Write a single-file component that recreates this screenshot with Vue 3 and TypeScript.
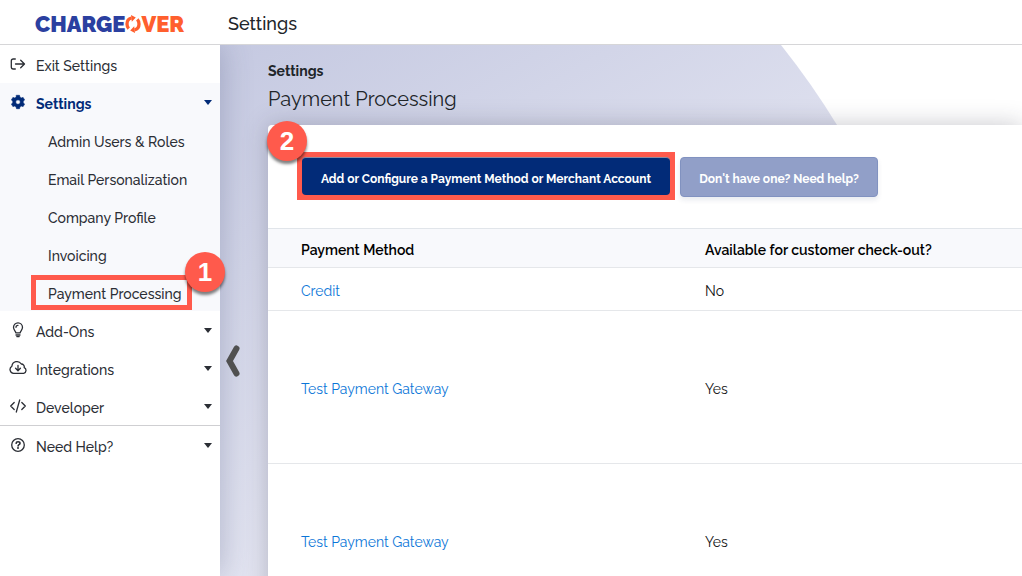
<script setup lang="ts">
import { ref } from 'vue'

interface NavItem {
  label: string
  icon: string
}

const subItems: string[] = [
  'Admin Users & Roles',
  'Email Personalization',
  'Company Profile',
  'Invoicing',
  'Payment Processing',
]
const current = ref('Payment Processing')

const sections: NavItem[] = [
  { label: 'Add-Ons', icon: 'bulb' },
  { label: 'Integrations', icon: 'cloud' },
  { label: 'Developer', icon: 'code' },
  { label: 'Need Help?', icon: 'help' },
]

const methods = [
  { name: 'Credit', available: 'No', tall: false },
  { name: 'Test Payment Gateway', available: 'Yes', tall: true },
  { name: 'Test Payment Gateway', available: 'Yes', tall: true },
]
</script>

<template>
  <div class="page">
    <header class="topbar">
      <a class="logo" href="#" aria-label="ChargeOver">
        <span class="logo-blue">CHARGE</span>
        <svg class="logo-o" viewBox="0 0 16 18" aria-hidden="true">
          <path d="M6.500 3C3.700 3.700 2 6 2 9c0 1.900.6 3.400 1.700 4.600M9.500 15c2.800-.7 4.500-3 4.500-6 0-1.900-.6-3.400-1.700-4.600" fill="none" stroke="#ff5f2e" stroke-width="3.300" />
          <path d="M6 0l4.800 2.600L6.800 6.800zM10 18l-4.800-2.600 4-4.200z" fill="#ff5f2e" />
        </svg>
        <span class="logo-orange">VER</span>
      </a>
      <h1>Settings</h1>
    </header>

    <div class="body">
      <nav class="sidebar" aria-label="Settings">
        <a class="row" href="#">
          <svg class="icon" viewBox="0 0 18 16" aria-hidden="true">
            <path d="M6.300 3H4.200C3 3 2.300 3.700 2.300 4.900v6.200c0 1.200.7 1.900 1.900 1.900h2.100M6.500 8h8.800M11.700 4.200L15.500 8l-3.800 3.800" />
          </svg>
          <span>Exit Settings</span>
        </a>
        <div class="group">
          <button class="row active" type="button" aria-expanded="true">
            <svg class="icon gear" viewBox="0 0 18 16" aria-hidden="true">
              <path fill-rule="evenodd" d="M7.500 1.300h3l.5 1.900 1.200.7 1.900-.5 1.500 2.600-1.400 1.300v1.400l1.400 1.300-1.500 2.600-1.900-.5-1.200.7-.5 1.900h-3L7 12.800l-1.200-.7-1.900.5L2.400 10l1.400-1.300V7.300L2.400 6l1.500-2.600 1.900.5L7 3.200zM9 5.700a2.300 2.300 0 1 0 0 4.600 2.300 2.300 0 0 0 0-4.600z" />
            </svg>
            <span>Settings</span>
            <i class="caret"></i>
          </button>
          <ul>
            <li v-for="item in subItems" :key="item">
              <a class="sub" href="#" @click.prevent="current = item">{{ item }}</a>
              <span v-if="item === current" class="outline"></span>
              <span v-if="item === current" class="badge badge-nav">1</span>
            </li>
          </ul>
        </div>
        <button v-for="s in sections" :key="s.label" class="row" :class="{ divided: s.icon === 'help' }" type="button">
          <svg class="icon" viewBox="0 0 18 16" aria-hidden="true">
            <template v-if="s.icon === 'bulb'">
              <path d="M6.900 10.800C6.600 9 4.500 8 4.500 5.300a4.500 4.500 0 0 1 9 0C13.500 8 11.400 9 11.100 10.800zM7 5.300c0-1.200.8-2 2-2" />
              <path d="M7 13h4M7.800 14.600h2.400" />
            </template>
            <template v-else-if="s.icon === 'cloud'">
              <path d="M4.600 13.400A3.900 3.900 0 0 1 2.900 6.200 5.100 5.100 0 0 1 12.300 4a2.900 2.900 0 0 1 2.900 3.600 3.100 3.100 0 0 1-.5 5.800zM9 5.400v5M6.600 8.300L9 10.700l2.400-2.400" />
            </template>
            <template v-else-if="s.icon === 'code'">
              <path d="M5.200 4.500L1.700 8l3.500 3.500M12.800 4.500L16.300 8l-3.500 3.500M10.700 2L7.300 14" />
            </template>
            <template v-else>
              <circle cx="9" cy="8" r="6.300" />
              <path d="M7.100 6.300c.1-1 .8-1.500 1.900-1.500s2 .6 2 1.600c0 1.300-1.900 1.300-1.900 2.500" stroke-width="1.600" />
              <circle class="dot" cx="9" cy="11" r="1" />
            </template>
          </svg>
          <span>{{ s.label }}</span>
          <i class="caret"></i>
        </button>
      </nav>

      <main class="main">
        <svg class="backdrop" viewBox="0 0 802 531" preserveAspectRatio="xMinYMin slice" aria-hidden="true">
          <defs>
            <linearGradient id="haze" gradientUnits="userSpaceOnUse" x1="0" y1="0" x2="300" y2="500">
              <stop offset="0" stop-color="#c5c9e1" />
              <stop offset="1" stop-color="#eaebf5" />
            </linearGradient>
          </defs>
          <path d="M0 0H561Q592 39 617 80L800 531H0z" fill="url(#haze)" />
        </svg>
        <button class="collapse" type="button" aria-label="Collapse menu">
          <svg viewBox="0 0 14 32" aria-hidden="true">
            <path d="M10.500 3.500L3.500 16l7 12.500" />
          </svg>
        </button>
        <div class="content">
          <p class="crumb">Settings</p>
          <h2>Payment Processing</h2>
          <section class="card">
            <span class="badge badge-card">2</span>
            <div class="actions">
              <div class="highlight">
                <button class="btn primary" type="button">Add or Configure a Payment Method or Merchant Account</button>
              </div>
              <button class="btn muted" type="button">Don't have one? Need help?</button>
            </div>
            <table>
              <thead>
                <tr>
                  <th scope="col">Payment Method</th>
                  <th scope="col">Available for customer check-out?</th>
                </tr>
              </thead>
              <tbody>
                <tr v-for="(m, i) in methods" :key="i" :class="{ tall: m.tall }">
                  <td><a href="#">{{ m.name }}</a></td>
                  <td>{{ m.available }}</td>
                </tr>
              </tbody>
            </table>
          </section>
        </div>
      </main>
    </div>
  </div>
</template>

<style>
body {
  margin: 0;
  overflow: hidden;
}
</style>

<style scoped>
.page {
  display: flex;
  flex-direction: column;
  height: 100vh;
  overflow: hidden;
  background: #fff;
  color: #212529;
  font-family: Raleway, Lato, "Open Sans", sans-serif;
  font-size: 14px;
  line-height: 20px;
}

* {
  box-sizing: border-box;
}

a {
  text-decoration: none;
}

button {
  margin: 0;
  border: 0;
  background: none;
  font: inherit;
  cursor: pointer;
}

.topbar {
  display: flex;
  flex: none;
  align-items: center;
  height: 45px;
  border-bottom: 1px solid #d6d6d8;
  padding-top: 3px;
}

.logo {
  display: flex;
  align-items: center;
  width: 228px;
  padding-left: 35px;
  font-size: 22px;
  font-weight: 900;
  line-height: 24px;
}

.logo-blue {
  color: #2b40a0;
}

.logo-orange {
  color: #ff5f2e;
}

.logo-o {
  width: 16px;
  height: 18px;
}

h1 {
  margin: 0;
  font-size: 18px;
  font-weight: 500;
  line-height: 24px;
}

.body {
  display: flex;
  flex: 1;
  min-height: 0;
}

.sidebar {
  position: relative;
  z-index: 2;
  flex: none;
  width: 220px;
  background: #fff;
  box-shadow: 0 0 30px rgba(60, 70, 110, 0.3);
  clip-path: inset(0 -40px 0 0);
}

.row {
  display: flex;
  align-items: center;
  gap: 9px;
  width: 100%;
  height: 38px;
  padding: 3px 8px 0 9px;
  color: #2b2e35;
  font-weight: 500;
  text-align: left;
}

.icon {
  flex: none;
  width: 18px;
  height: 16px;
  margin-bottom: 3px;
  fill: none;
  stroke: currentColor;
  stroke-width: 1.3;
  stroke-linecap: round;
  stroke-linejoin: round;
}

.gear {
  fill: currentColor;
  stroke-width: 0.6;
}

.dot {
  fill: currentColor;
  stroke: none;
}

.caret {
  width: 0;
  height: 0;
  margin: 0 0 2px auto;
  border: 4px solid transparent;
  border-top: 5px solid currentColor;
  border-bottom: 0;
}

.group {
  background: #f8f9fc;
}

.active {
  color: #022b78;
  font-weight: 700;
}

.divided {
  height: 39px;
  border-top: 1px solid #cfcfd2;
}

ul {
  margin: 0;
  padding: 0;
  list-style: none;
}

li {
  position: relative;
}

.sub {
  display: flex;
  align-items: center;
  height: 38px;
  padding: 3px 0 0 48px;
  color: #2b2e35;
  font-weight: 500;
}

.outline {
  position: absolute;
  top: 2px;
  left: 31px;
  width: 161px;
  height: 35px;
  border: 5px solid #ff5a4c;
}

.badge {
  position: absolute;
  width: 40px;
  height: 40px;
  border-radius: 50%;
  background: #ff5a4c;
  box-shadow: 0 3px 3px rgba(0, 0, 0, 0.5);
  color: #fff;
  font-family: "Liberation Sans", sans-serif;
  font-size: 26px;
  font-weight: 700;
  line-height: 40px;
  text-align: center;
}

.badge-nav {
  top: -21px;
  left: 185px;
}

.badge-card {
  top: -4px;
  left: -1px;
}

.main {
  position: relative;
  flex: 1;
  min-width: 0;
}

.backdrop {
  position: absolute;
  inset: 0;
  width: 100%;
  height: 100%;
}

.collapse {
  position: absolute;
  z-index: 3;
  top: 300px;
  left: 6px;
  padding: 0;
}

.collapse svg {
  display: block;
  width: 14px;
  height: 32px;
  fill: none;
  stroke: #505050;
  stroke-width: 6;
  stroke-linecap: round;
}

.content {
  position: relative;
  height: 100%;
  padding: 16px 0 0 48px;
}

.crumb {
  margin: 0;
  font-weight: 700;
}

h2 {
  margin: 4px 0 12px;
  font-size: 20px;
  font-weight: 400;
  line-height: 28px;
}

.card {
  position: relative;
  min-height: 100%;
  border-top-left-radius: 4px;
  background: #fff;
  box-shadow: 0 0 24px rgba(40, 40, 60, 0.25);
}

.actions {
  display: flex;
  align-items: flex-end;
  gap: 5px;
  padding: 27px 29px 28px;
}

.highlight {
  border: 5px solid #ff5a4c;
  background: #ff5a4c;
}

.btn {
  display: block;
  border-radius: 4px;
  padding: 4px 0 0;
  color: #fff;
  font-size: 12px;
  font-weight: 700;
  white-space: nowrap;
}

.primary {
  width: 368px;
  height: 38px;
  border-top: 1px solid #8a8aa0;
  background: #022b78;
}

.muted {
  width: 198px;
  height: 40px;
  margin-bottom: 3px;
  border: 1px solid #8192c0;
  background: #919fc8;
  box-shadow: 0 3px 5px rgba(40, 60, 110, 0.1);
}

table {
  width: 100%;
  border-collapse: collapse;
  table-layout: fixed;
  color: #111;
}

th,
td {
  height: 43px;
  border-bottom: 1px solid #e5e7ea;
  padding: 3px 0 0 33px;
  text-align: left;
}

th {
  height: 39px;
  border-top: 1px solid #e1e5ea;
  background: #f8f9fc;
  color: #000;
  font-weight: 600;
}

th:first-child {
  width: 404px;
}

.tall td {
  height: 153px;
}

td a {
  color: #0b76d8;
}
</style>
